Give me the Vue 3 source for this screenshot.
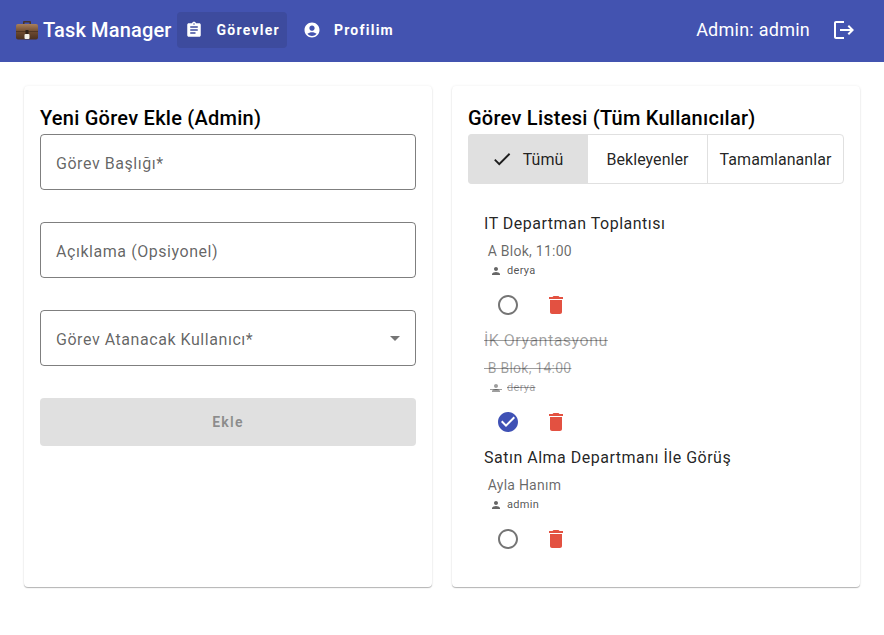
<script setup>
const paths = {
  assignment: 'M19 3h-4.18C14.4 1.84 13.3 1 12 1c-1.3 0-2.4.84-2.82 2H5c-1.1 0-2 .9-2 2v14c0 1.1.9 2 2 2h14c1.1 0 2-.9 2-2V5c0-1.1-.9-2-2-2zm-7 0c.55 0 1 .45 1 1s-.45 1-1 1-1-.45-1-1 .45-1 1-1zm2 14H7v-2h7v2zm3-4H7v-2h10v2zm0-4H7V7h10v2z',
  account: 'M12 2C6.48 2 2 6.48 2 12s4.48 10 10 10 10-4.48 10-10S17.52 2 12 2zm0 4c1.93 0 3.5 1.57 3.5 3.5S13.93 13 12 13s-3.5-1.57-3.5-3.5S10.07 6 12 6zm0 14c-2.03 0-4.43-.82-6.14-2.88C7.55 15.8 9.68 15 12 15s4.45.8 6.14 2.12C16.43 19.18 14.03 20 12 20z',
  logout: 'M17 7l-1.41 1.41L18.17 11H8v2h10.17l-2.58 2.58L17 17l5-5zM4 5h8V3H4c-1.1 0-2 .9-2 2v14c0 1.1.9 2 2 2h8v-2H4V5z',
  check: 'M9 16.17 4.83 12l-1.42 1.41L9 19 21 7l-1.41-1.41z',
  person: 'M12 12c2.21 0 4-1.79 4-4s-1.79-4-4-4-4 1.79-4 4 1.79 4 4 4zm0 2c-2.67 0-8 1.34-8 4v2h16v-2c0-2.66-5.33-4-8-4z',
  del: 'M6 19c0 1.1.9 2 2 2h8c1.1 0 2-.9 2-2V7H6v12zM19 4h-3.5l-1-1h-5l-1 1H5v2h14V4z',
  open: 'M12 2C6.48 2 2 6.48 2 12s4.48 10 10 10 10-4.48 10-10S17.52 2 12 2zm0 18c-4.42 0-8-3.58-8-8s3.58-8 8-8 8 3.58 8 8-3.58 8-8 8z',
  done: 'M12 2C6.48 2 2 6.48 2 12s4.48 10 10 10 10-4.48 10-10S17.52 2 12 2zm-2 15-5-5 1.41-1.41L10 14.17l7.59-7.59L19 8l-9 9z',
  arrow: 'M7 10l5 5 5-5z'
}
const tasks = [
  { title: 'IT Departman Toplantısı', desc: 'A Blok, 11:00', user: 'derya', done: false },
  { title: 'İK Oryantasyonu', desc: 'B Blok, 14:00', user: 'derya', done: true },
  { title: 'Satın Alma Departmanı İle Görüş', desc: 'Ayla Hanım', user: 'admin', done: false }
]
</script>

<template>
  <div class="app">
    <header class="bar">
      <div class="brand">
        <svg class="case" width="22" height="22" viewBox="0 0 22 22" aria-hidden="true">
          <defs>
            <linearGradient id="caseBody" x1="0" y1="0" x2="0" y2="1">
              <stop offset="0" stop-color="#a9805c" />
              <stop offset="0.5" stop-color="#6d4a30" />
              <stop offset="1" stop-color="#4a3020" />
            </linearGradient>
          </defs>
          <path d="M7 5V3.2C7 2.5 7.5 2 8.2 2h5.6c.7 0 1.2.5 1.2 1.200V5h-1.500V3.500h-5V5z" fill="#4a3528" />
          <rect x="0" y="5" width="22" height="15.500" rx="2" fill="url(#caseBody)" />
          <rect x="0" y="12" width="22" height="1" fill="#3d281a" opacity=".6" />
          <rect x="8.500" y="15" width="5" height="5" rx="1" fill="#f2efe9" />
          <rect x="9.500" y="11" width="3" height="4" fill="#2f2018" />
        </svg>
        <span class="brand-text">Task Manager</span>
      </div>
      <nav class="nav">
        <a class="nav-btn active">
          <svg class="nav-icon" viewBox="0 0 24 24"><path :d="paths.assignment" /></svg>
          <span>Görevler</span>
        </a>
        <a class="nav-btn">
          <svg class="nav-icon" viewBox="0 0 24 24"><path :d="paths.account" /></svg>
          <span>Profilim</span>
        </a>
      </nav>
      <div class="spacer"></div>
      <span class="who">Admin: admin</span>
      <button class="logout" aria-label="Çıkış">
        <svg width="24" height="24" viewBox="0 0 24 24"><path :d="paths.logout" /></svg>
      </button>
    </header>

    <main class="main">
      <section class="card">
        <h2 class="card-title">Yeni Görev Ekle (Admin)</h2>
        <div class="form">
          <div class="field"><span>Görev Başlığı*</span></div>
          <div class="field"><span>Açıklama (Opsiyonel)</span></div>
          <div class="field">
            <span>Görev Atanacak Kullanıcı*</span>
            <svg class="arrow" width="24" height="24" viewBox="0 0 24 24"><path :d="paths.arrow" /></svg>
          </div>
          <div class="submit">Ekle</div>
        </div>
      </section>

      <section class="card">
        <h2 class="card-title">Görev Listesi (Tüm Kullanıcılar)</h2>
        <div class="toggle">
          <div class="tg tg-all">
            <svg width="22" height="22" viewBox="0 0 24 24"><path :d="paths.check" /></svg>
            <span>Tümü</span>
          </div>
          <div class="tg tg-wait">Bekleyenler</div>
          <div class="tg tg-done">Tamamlananlar</div>
        </div>
        <ul class="list">
          <li v-for="t in tasks" :key="t.title" class="task" :class="{ finished: t.done }">
            <div class="t-title">{{ t.title }}</div>
            <div class="t-desc">&nbsp;{{ t.desc }}</div>
            <div class="t-user">
              <span class="t-user-icon">
                <svg width="12" height="12" viewBox="0 0 24 24"><path :d="paths.person" /></svg>
              </span>
              <span class="t-user-name">{{ t.user }}</span>
            </div>
            <div class="t-actions">
              <span class="act">
                <svg width="24" height="24" viewBox="0 0 24 24" :class="t.done ? 'ic-done' : 'ic-open'"><path :d="t.done ? paths.done : paths.open" /></svg>
              </span>
              <span class="act">
                <svg width="24" height="24" viewBox="0 0 24 24" class="ic-del"><path :d="paths.del" /></svg>
              </span>
            </div>
          </li>
        </ul>
      </section>
    </main>
  </div>
</template>

<style>
html, body { margin: 0; background: #fff; }
</style>

<style scoped>
.app { font-family: Roboto, "Noto Sans", sans-serif; width: 884px; height: 635px; overflow: hidden; background: #fff; }
.bar { display: flex; align-items: center; height: 62px; background: #4353b0; color: #fff; padding: 0 28px 2px 16px; box-sizing: border-box; }
.brand { display: flex; align-items: center; gap: 5px; margin-right: 6px; }
.case { display: block; }
.brand-text { font-size: 20px; font-weight: 500; line-height: 32px; letter-spacing: 0.15px; }
.nav { display: flex; gap: 8px; }
.nav-btn { display: flex; align-items: center; height: 36px; padding: 0 7px 0 8px; border-radius: 4px; font-size: 14px; font-weight: 700; letter-spacing: 1.25px; }
.nav-btn.active { background: #3d4b9e; }
.nav-icon { width: 18px; height: 18px; fill: #fff; margin-right: 13px; }
.spacer { flex: 1; }
.who { font-size: 18px; line-height: 28px; margin-right: 22px; letter-spacing: 0.25px; }
.logout { display: flex; padding: 0; border: 0; background: none; }
.logout svg { fill: #fff; }
.main { display: grid; grid-template-columns: repeat(2, minmax(0, 1fr)); gap: 20px; padding: 24px; }
.card { height: 501px; box-sizing: border-box; background: #fff; border-radius: 4px; padding: 16px; box-shadow: 0 1px 1px rgba(0,0,0,.28), 0 0 3px rgba(0,0,0,.07); }
.card-title { margin: 0; font-size: 20px; font-weight: 500; line-height: 32px; color: #000; letter-spacing: 0.25px; height: 32px; }
.form { display: flex; flex-direction: column; gap: 32px; }
.field { position: relative; display: flex; align-items: center; height: 56px; box-sizing: border-box; border: 1px solid rgba(0,0,0,.5); border-radius: 4px; padding: 2px 15px 0; font-size: 16px; letter-spacing: 0.55px; color: rgba(0,0,0,.62); }
.arrow { position: absolute; right: 8px; top: 15px; fill: rgba(0,0,0,.54); }
.submit { display: flex; align-items: center; justify-content: center; height: 48px; border-radius: 4px; background: #e0e0e0; color: rgba(0,0,0,.38); font-size: 14px; font-weight: 700; letter-spacing: 1.25px; }
.toggle { display: grid; grid-template-columns: 119px 120px 135px; height: 50px; box-sizing: border-box; border: 1px solid #e0e0e0; border-radius: 4px; font-size: 16px; letter-spacing: 0.05px; color: rgba(0,0,0,.87); }
.tg { display: flex; align-items: center; justify-content: center; }
.tg-all { background: #e0e0e0; gap: 10px; padding-right: 2px; margin: -1px 0 -1px -1px; border-radius: 4px 0 0 4px; }
.tg-all svg { fill: rgba(0,0,0,.87); }
.tg-wait { border-right: 1px solid #e0e0e0; }
.list { list-style: none; margin: 24px 0 0; padding: 0; }
.task { height: 117px; box-sizing: border-box; padding: 6px 16px 0; }
.t-title { font-size: 16px; line-height: 20px; letter-spacing: 0.5px; color: rgba(0,0,0,.87); }
.t-desc { margin-top: 7px; font-size: 14px; line-height: 20px; letter-spacing: 0.25px; color: rgba(0,0,0,.6); }
.t-user { display: flex; align-items: center; gap: 5px; margin: 2px 0 0 6px; font-size: 11px; line-height: 16px; letter-spacing: 0.3px; color: rgba(0,0,0,.7); }
.t-user-icon { position: relative; display: flex; flex: none; }
.t-user-icon svg { fill: rgba(0,0,0,.6); }
.t-actions { display: flex; margin: 6px 0 0 4px; }
.act { display: flex; align-items: center; justify-content: center; width: 40px; height: 40px; margin-right: 8px; }
.ic-open { fill: #757575; }
.ic-done { fill: #3f51b5; }
.ic-del { fill: #e35141; }
.finished .t-title, .finished .t-desc, .finished .t-user-name { text-decoration: line-through; color: rgba(0,0,0,.38); }
.finished .t-user-icon svg { fill: rgba(0,0,0,.38); }
.finished .t-user-icon::after { content: ""; position: absolute; left: 0; right: 0; top: 7px; height: 1px; background: rgba(0,0,0,.38); }
</style>
